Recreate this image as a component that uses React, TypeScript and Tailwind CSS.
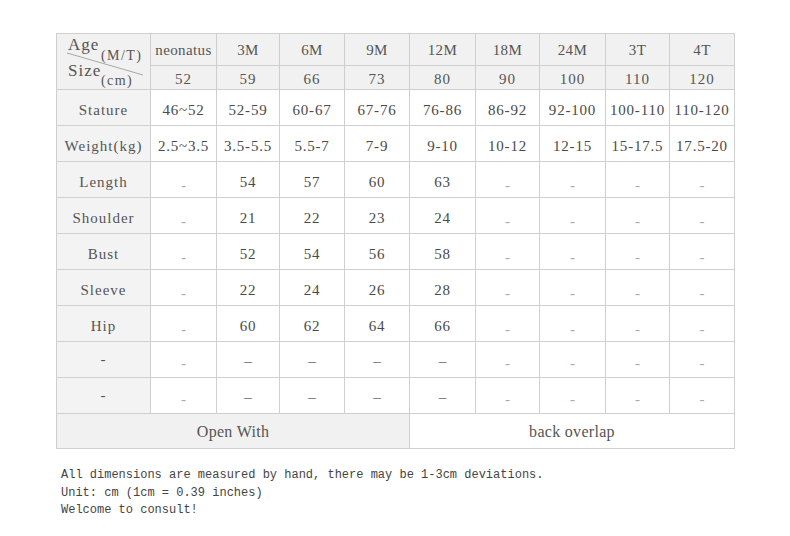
import React from "react";

const cols = [94, 66, 63, 65, 65, 66, 64, 66, 64, 65];
const ages = ["neonatus", "3M", "6M", "9M", "12M", "18M", "24M", "3T", "4T"];
const sizes = ["52", "59", "66", "73", "80", "90", "100", "110", "120"];

type Row = { label: string; values: string[]; empty?: boolean };

const rows: Row[] = [
  { label: "Stature", values: ["46~52", "52-59", "60-67", "67-76", "76-86", "86-92", "92-100", "100-110", "110-120"] },
  { label: "Weight(kg)", values: ["2.5~3.5", "3.5-5.5", "5.5-7", "7-9", "9-10", "10-12", "12-15", "15-17.5", "17.5-20"] },
  { label: "Length", values: ["-", "54", "57", "60", "63", "-", "-", "-", "-"] },
  { label: "Shoulder", values: ["-", "21", "22", "23", "24", "-", "-", "-", "-"] },
  { label: "Bust", values: ["-", "52", "54", "56", "58", "-", "-", "-", "-"] },
  { label: "Sleeve", values: ["-", "22", "24", "26", "28", "-", "-", "-", "-"] },
  { label: "Hip", values: ["-", "60", "62", "64", "66", "-", "-", "-", "-"] },
  { label: "-", values: ["-", "–", "–", "–", "–", "-", "-", "-", "-"], empty: true },
  { label: "-", values: ["-", "–", "–", "–", "–", "-", "-", "-", "-"], empty: true },
];

const serif = "font-['Liberation_Serif',serif]";

function ValueCell({ v, empty }: { v: string; empty?: boolean }) {
  if (v === "-") {
    return (
      <td
        className={`border border-[#cfcfcf] bg-white p-0 text-center align-middle text-[15px] leading-[20px] text-[#aaaaaa] ${
          empty ? "pt-[7px]" : "pt-[11px]"
        }`}
      >
        -
      </td>
    );
  }
  if (v === "–") {
    return (
      <td className="border border-[#cfcfcf] bg-white p-0 pt-[2px] text-center align-middle text-[15px] leading-[20px] text-[#666666]">
        –
      </td>
    );
  }
  return (
    <td className="border border-[#cfcfcf] bg-white p-0 pt-[4px] text-center align-middle text-[15px] leading-[20px] tracking-[0.8px] text-[#4a4a4a]">
      {v}
    </td>
  );
}

export default function App() {
  return (
    <div className={`min-h-[536px] w-[790px] bg-white pl-[56px] pt-[33px] ${serif}`}>
      <table className="w-[679px] table-fixed border-collapse">
        <colgroup>
          {cols.map((w, i) => (
            <col key={i} style={{ width: w }} />
          ))}
        </colgroup>
        <tbody>
          <tr className="h-[32px]">
            <td rowSpan={2} className="relative border border-[#cfcfcf] bg-[#f1f1f1] p-0 align-top text-[#555555]">
              <svg className="absolute left-0 top-0" width="94" height="56" viewBox="0 0 94 56">
                <line x1="10" y1="19" x2="86" y2="41" stroke="#a8a8a8" strokeWidth="1" />
              </svg>
              <div className="relative h-[55px] pl-[11px] pt-[2px]">
                <div className="flex items-start leading-none">
                  <span className="w-[33px] text-[17px] tracking-[1px]">Age</span>
                  <span className="mt-[13px] text-[14px] tracking-[1.4px]">(M/T)</span>
                </div>
                <div className="-mt-[1px] flex items-start leading-none">
                  <span className="w-[33px] text-[17px] tracking-[1px]">Size</span>
                  <span className="mt-[12px] text-[14px] tracking-[1.4px]">(cm)</span>
                </div>
              </div>
            </td>
            {ages.map((a) => (
              <td
                key={a}
                className="border border-[#cfcfcf] bg-[#f1f1f1] p-0 pt-[1px] text-center align-middle text-[15px] leading-[20px] tracking-[0.4px] text-[#555555]"
              >
                {a}
              </td>
            ))}
          </tr>
          <tr className="h-[24px]">
            {sizes.map((s) => (
              <td
                key={s}
                className="border border-[#cfcfcf] bg-[#f1f1f1] p-0 pt-[2px] text-center align-middle text-[15px] leading-[20px] tracking-[1px] text-[#555555]"
              >
                {s}
              </td>
            ))}
          </tr>
          {rows.map((r, i) => (
            <tr key={i} className="h-[36px]">
              <td
                className={`border border-[#cfcfcf] bg-[#f3f3f3] p-0 text-center align-middle text-[15px] leading-[20px] tracking-[1px] text-[#555555] ${
                  r.empty ? "pb-[2px]" : "pt-[4px]"
                }`}
              >
                {r.label}
              </td>
              {r.values.map((v, j) => (
                <ValueCell key={j} v={v} empty={r.empty} />
              ))}
            </tr>
          ))}
          <tr className="h-[35px]">
            <td colSpan={5} className="border border-[#cfcfcf] bg-[#f1f1f1] p-0 pt-[2px] text-center align-middle text-[16px] leading-[20px] tracking-[0.3px] text-[#555555]">
              Open With
            </td>
            <td colSpan={5} className="border border-[#cfcfcf] bg-white p-0 pt-[2px] text-center align-middle text-[16px] leading-[20px] tracking-[0.3px] text-[#555555]">
              back overlap
            </td>
          </tr>
        </tbody>
      </table>
      <div className="mt-[18px] pl-[5px] font-['Liberation_Mono',monospace] text-[12px] leading-[17.5px] text-[#444444]">
        <div>All dimensions are measured by hand, there may be 1-3cm deviations.</div>
        <div>Unit: cm (1cm = 0.39 inches)</div>
        <div>Welcome to consult!</div>
      </div>
    </div>
  );
}
